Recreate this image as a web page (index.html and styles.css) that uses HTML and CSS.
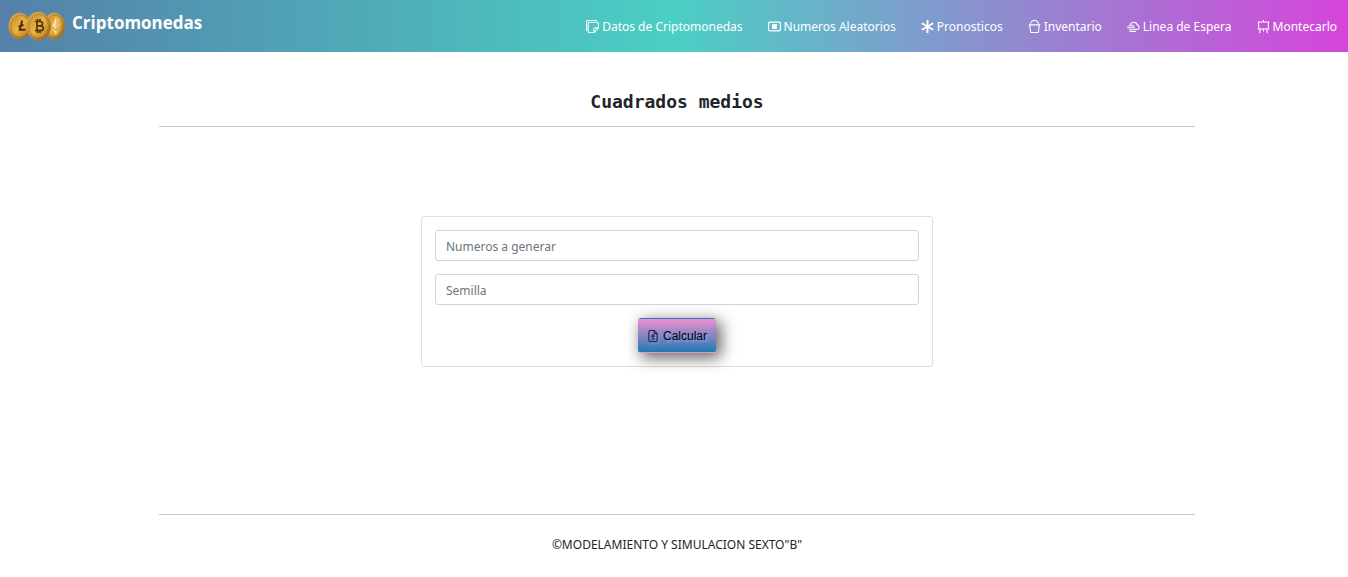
FILE: index.html
```
<!DOCTYPE html>
<html lang="es">
<head>
<meta charset="utf-8">
<title>Criptomonedas</title>
<link rel="stylesheet" href="styles.css">
</head>
<body>
<header class="navbar">
  <a class="brand" href="#">
    <svg class="coins" viewBox="0 0 58 30" width="58" height="30" aria-hidden="true">
      <defs>
        <linearGradient id="gold" x1="0" y1="0" x2="1" y2="1">
          <stop offset="0" stop-color="#e3b557"/><stop offset=".5" stop-color="#c48c2c"/><stop offset="1" stop-color="#966318"/>
        </linearGradient>
        <linearGradient id="face" x1="0" y1="0" x2="1" y2="1">
          <stop offset="0" stop-color="#c58d2d"/><stop offset=".5" stop-color="#e9b444"/><stop offset="1" stop-color="#b67a20"/>
        </linearGradient>
      </defs>
      <ellipse cx="12" cy="15" rx="11.5" ry="13.2" fill="url(#gold)"/>
      <ellipse cx="12" cy="15" rx="9" ry="10.7" fill="url(#face)" stroke="#a8752a" stroke-width=".9" stroke-dasharray="2 1"/>
      <path d="M14.2 9.5 11.8 18.8H17.5M10.5 15.8l5-2" fill="none" stroke="#54300e" stroke-width="2"/>
      <ellipse cx="46.5" cy="15" rx="10.5" ry="13.2" fill="url(#gold)"/>
      <ellipse cx="46.5" cy="15" rx="8.2" ry="10.7" fill="url(#face)" stroke="#a8752a" stroke-width=".9" stroke-dasharray="2 1"/>
      <path d="m48 6 4 9-4 3-4-3zM44 17l4 3 4-3-4 7z" fill="#fce09a"/>
      <path d="m48 6 4 9-4 3zM48 20l4-3-4 7z" fill="#e9bd6c"/>
      <ellipse cx="30.5" cy="15" rx="12.5" ry="14.3" fill="url(#gold)"/>
      <ellipse cx="30.5" cy="15" rx="9.8" ry="11.6" fill="url(#face)" stroke="#a8752a" stroke-width=".9" stroke-dasharray="2 1"/>
      <path d="M29.5 8v2.500M32 8v2.500M29.500 19.500V22M32 19.500V22M27 10.500h5c3.300 0 3.300 4.300 0 4.300h-3 3.500c3.800 0 3.600 4.700 0 4.700H27M29 10.500v9" fill="none" stroke="#54300e" stroke-width="1.700"/>
    </svg>
    <span class="brand-name">Criptomonedas</span>
  </a>
  <nav class="menu">
    <a href="#"><svg class="icon" viewBox="0 0 16 16"><path d="M.7 13.500V2Q.7.700 2 .7h11.500M2.700 4Q2.700 2.700 4 2.700h10q1.300 0 1.300 1.300v6l-5.300 5.300H4q-1.300 0-1.300-1.300zM15 9.700h-3.500q-1.800 0-1.800 1.800V15" fill="none" stroke="currentColor" stroke-width="1.300"/></svg>Datos de Criptomonedas</a>
    <a href="#"><svg class="icon" viewBox="0 0 16 16"><rect x=".7" y="2.700" width="14.600" height="10.600" rx="1.500" fill="none" stroke="currentColor" stroke-width="1.500"/><rect x="5" y="5" width="6" height="6"/></svg>Numeros Aleatorios</a>
    <a href="#"><svg class="icon" viewBox="0 0 16 16"><path d="M8 0v16M1 4l14 8M15 4 1 12" fill="none" stroke="currentColor" stroke-width="2.300"/></svg>Pronosticos</a>
    <a href="#"><svg class="icon" viewBox="0 0 16 16"><path d="M3 5.500a5 5 0 0 1 10 0M1 6h14M2 6l1.200 8.700q.2.800 1 .8h7.600q.8 0 1-.8L14 6" fill="none" stroke="currentColor" stroke-width="1.300"/></svg>Inventario</a>
    <a href="#"><svg class="icon" viewBox="0 0 16 16"><path d="M4 5.500A4.500 4.500 0 0 1 12.500 6a2.900 2.900 0 0 1 .3 5.700H10M2 6.500h4.500q1.500 0 1.500 1.500M0 9h9.500M2 11.500h8.500M3 14h8" fill="none" stroke="currentColor" stroke-width="1.300"/></svg>Linea de Espera</a>
    <a href="#"><svg class="icon" viewBox="0 0 16 16"><path d="M8 0v2.500M2 2.500h12v8.500H2zM1 2.500h14M1 11h14M4.500 11l-1.500 5M11.500 11l1.500 5M8 11v3" fill="none" stroke="currentColor" stroke-width="1.300"/></svg>Montecarlo</a>
  </nav>
</header>
<main class="container">
  <h1 class="title">Cuadrados medios</h1>
  <form class="card">
    <input class="field" type="text" placeholder="Numeros a generar" aria-label="Numeros a generar">
    <input class="field" type="text" placeholder="Semilla" aria-label="Semilla">
    <button class="calc" type="button"><svg class="calc-icon" viewBox="0 0 16 16"><path d="M9.500.6H4A1.500 1.500 0 0 0 2.500 2v12A1.500 1.500 0 0 0 4 15.500h8a1.500 1.500 0 0 0 1.500-1.500V4.500zM9.500.6v4h4M8 5.500v5M5.500 8h5M5.500 12h5" fill="none" stroke="currentColor" stroke-width="1.100"/></svg>Calcular</button>
  </form>
</main>
<footer class="container footer">©MODELAMIENTO Y SIMULACION SEXTO"B"</footer>
</body>
</html>
```
FILE: styles.css
```
* {
  box-sizing: border-box;
}

body {
  margin: 0;
  background: #fff;
  color: #212529;
  font: 12px/20px "Noto Sans", sans-serif;
}

.navbar {
  display: flex;
  justify-content: space-between;
  align-items: center;
  min-height: 52px;
  padding: 0 11px 0 8px;
  background: linear-gradient(90deg, #5580aa, #4bcfc4 50%, #d645db);
}

.navbar a {
  color: #fff;
  text-decoration: none;
}

.brand {
  display: flex;
  align-items: center;
  gap: 6px;
}

.coins {
  flex: none;
}

.brand-name {
  padding-bottom: 6px;
  font: 700 17px/24px "Open Sans", sans-serif;
}

.menu {
  display: flex;
  gap: 25px;
  padding-top: 1px;
  white-space: nowrap;
}

.menu a {
  display: flex;
  align-items: center;
  gap: 3px;
}

.icon {
  width: 13px;
  height: 13px;
  flex: none;
  fill: currentColor;
}

.container {
  width: calc(100% - 312px);
  margin: 0 auto;
  position: relative;
  left: 3px;
}

.title {
  margin: 0;
  padding: 38px 0 12px;
  border-bottom: 1px solid #c8c9ca;
  font: 700 18px/24px "DejaVu Sans Mono", monospace;
  text-align: center;
}

.card {
  display: flex;
  flex-direction: column;
  align-items: center;
  gap: 13px;
  max-width: 512px;
  margin: 89px auto 147px;
  padding: 13px;
  border: 1px solid #dfdfdf;
  border-radius: 3px;
}

.field {
  width: 100%;
  height: 31px;
  padding: 2px 10px 0;
  border: 1px solid #ced4da;
  border-radius: 3px;
  color: #495057;
  font: inherit;
}

.field::placeholder {
  color: #6c757d;
  opacity: 1;
}

.calc {
  display: flex;
  align-items: center;
  gap: 4px;
  height: 35px;
  padding: 0 8px;
  border: 1px solid transparent;
  border-radius: 3px;
  background: linear-gradient(#ef8fd0, #2079b4);
  box-shadow: 4px 4px 15px 1px rgba(0, 0, 0, .6);
  color: #000;
  font: 12px/18px "Liberation Sans", Arial, sans-serif;
  text-shadow: 2px 2px 2px #7f9bee;
}

.calc-icon {
  width: 12px;
  height: 12px;
  filter: drop-shadow(2px 2px 1px #7f9bee);
}

.footer {
  padding: 20px 0;
  border-top: 1px solid #c8c9ca;
  text-align: center;
}
```
